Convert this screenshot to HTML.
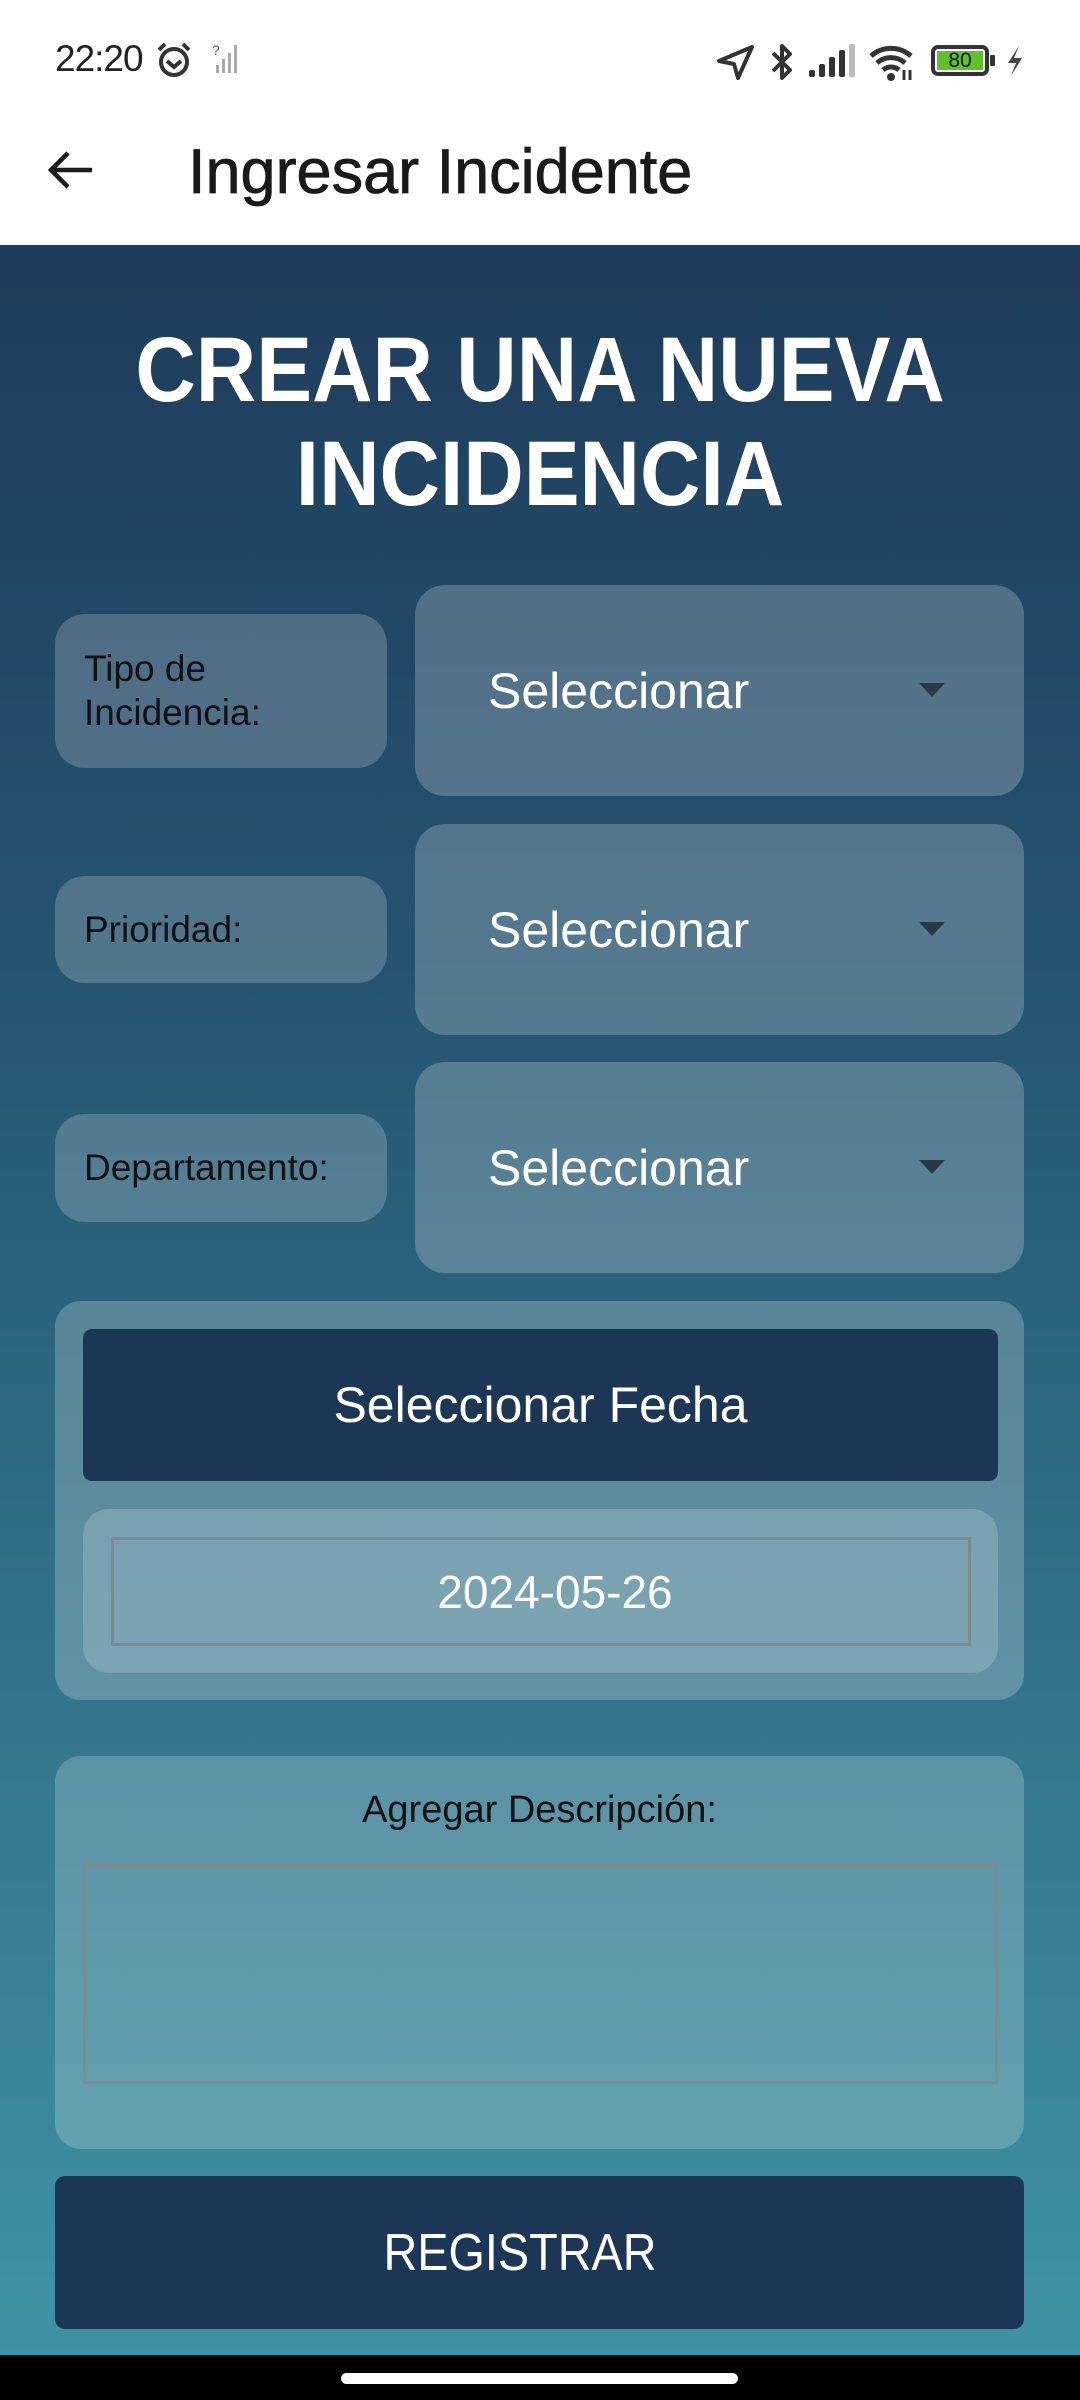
<!DOCTYPE html>
<html><head><meta charset="utf-8"><style>
*{margin:0;padding:0;box-sizing:border-box}
body{width:1080px;height:2400px;position:relative;overflow:hidden;background:#fff;font-family:"Liberation Sans",sans-serif}
.a{position:absolute}
.main{left:0;top:245px;width:1080px;height:2110px;background:linear-gradient(180deg,#1e3c5b 0%,#255571 35%,#33768d 70%,#3f93a5 100%)}
.lab{background:rgba(255,255,255,0.2);border-radius:30px;left:55px;width:332px;color:#111;font-size:37px;padding-left:29px;display:flex;align-items:center;line-height:44px}
.dd{background:rgba(255,255,255,0.22);border-radius:30px;left:415px;width:609px;height:211px;color:#fff;font-size:50px;display:flex;align-items:center;padding-left:73px}
.dd .ar{position:absolute;left:504px;top:98px;width:0;height:0;border-left:13px solid transparent;border-right:13px solid transparent;border-top:14px solid #2a3a44}
.ctr{display:flex;align-items:center;justify-content:center}
</style></head><body>
<div class="a" style="left:55px;top:38px;font-size:37px;color:#222;letter-spacing:-1px">22:20</div>
<svg class="a" style="left:154px;top:40px" width="40" height="40" viewBox="0 0 40 40"><circle cx="20" cy="22" r="13" fill="none" stroke="#333" stroke-width="4"/><path d="M13 21l7 6 7-6" fill="none" stroke="#333" stroke-width="4"/><path d="M5 10l6-6M35 10l-6-6" stroke="#333" stroke-width="4"/></svg>
<svg class="a" style="left:212px;top:43px" width="30" height="32" viewBox="0 0 30 32"><path d="M4 30h3v-8H4zM10 30h3V16h-3zM16 30h3V10h-3zM22 30h3V2h-3z" fill="#aaa"/><text x="0" y="12" font-size="14" fill="#555" font-family="Liberation Sans">?</text></svg>
<svg class="a" style="left:716px;top:44px" width="40" height="36" viewBox="0 0 40 36"><path d="M36 3L3 17l15 3 4 14z" fill="none" stroke="#333" stroke-width="4" stroke-linejoin="round"/></svg>
<svg class="a" style="left:768px;top:42px" width="28" height="40" viewBox="0 0 28 40"><path d="M5 11l17 17-8 8V4l8 8L5 29" fill="none" stroke="#333" stroke-width="4" stroke-linejoin="round"/></svg>
<svg class="a" style="left:806px;top:44px" width="52" height="34" viewBox="0 0 52 34"><rect x="3" y="26" width="6" height="7" rx="2" fill="#333"/><rect x="13" y="20" width="6" height="13" rx="2" fill="#333"/><rect x="23" y="13" width="6" height="20" rx="2" fill="#333"/><rect x="33" y="6" width="6" height="27" rx="2" fill="#333"/><rect x="43" y="0" width="6" height="33" rx="2" fill="#bbb"/></svg>
<svg class="a" style="left:868px;top:42px" width="50" height="40" viewBox="0 0 50 40"><path d="M3 14a30 30 0 0 1 40 0M9 21a21 21 0 0 1 28 0M15 28a12 12 0 0 1 16 0" fill="none" stroke="#333" stroke-width="5"/><circle cx="23" cy="35" r="4" fill="#333"/><path d="M36 28v10M42 28v10" stroke="#333" stroke-width="3"/></svg>
<div class="a" style="left:931px;top:45px;width:58px;height:31px;border:4px solid #333;border-radius:7px;padding:2px"><div style="width:46px;height:19px;background:#5fc22d;font-size:21px;line-height:19px;text-align:center;color:#111">80</div></div>
<div class="a" style="left:990px;top:55px;width:5px;height:11px;background:#333;border-radius:1px"></div>
<svg class="a" style="left:1004px;top:44px" width="22" height="34" viewBox="0 0 22 34"><path d="M15 2L4 19h8L7 32l11-18h-8z" fill="#444"/></svg>
<svg class="a" style="left:46px;top:148px" width="50" height="44" viewBox="0 0 50 44"><path d="M46 22H6M22 5L5 22l17 17" fill="none" stroke="#1a1a1a" stroke-width="4.5"/></svg>
<div class="a" style="left:188px;top:136px;font-size:63px;color:#1a1a1a;-webkit-text-stroke:0.8px #1a1a1a">Ingresar Incidente</div>
<div class="a main"></div>
<div class="a" style="left:0;top:318px;width:1080px;text-align:center;color:#fff;font-weight:bold;font-size:92px;line-height:104px;transform:scaleX(0.91)">CREAR UNA NUEVA<br>INCIDENCIA</div>

<div class="a lab" style="top:614px;height:154px">Tipo de<br>Incidencia:</div>
<div class="a dd" style="top:585px">Seleccionar<div class="ar"></div></div>
<div class="a lab" style="top:876px;height:107px">Prioridad:</div>
<div class="a dd" style="top:824px">Seleccionar<div class="ar"></div></div>
<div class="a lab" style="top:1114px;height:108px">Departamento:</div>
<div class="a dd" style="top:1062px">Seleccionar<div class="ar"></div></div>

<div class="a" style="left:55px;top:1301px;width:969px;height:399px;background:rgba(255,255,255,0.22);border-radius:26px"></div>
<div class="a ctr" style="left:83px;top:1329px;width:915px;height:152px;background:#1c3756;border-radius:9px;color:#fff;font-size:50px">Seleccionar Fecha</div>
<div class="a" style="left:83px;top:1509px;width:915px;height:164px;background:rgba(255,255,255,0.18);border-radius:26px"></div>
<div class="a ctr" style="left:111px;top:1537px;width:860px;height:109px;border:3px solid #7d8a90;color:#fff;font-size:46px;padding-left:28px">2024-05-26</div>

<div class="a" style="left:55px;top:1756px;width:969px;height:393px;background:rgba(255,255,255,0.2);border-radius:26px"></div>
<div class="a" style="left:55px;top:1789px;width:969px;text-align:center;color:#111;font-size:38px">Agregar Descripción:</div>
<div class="a" style="left:83px;top:1864px;width:915px;height:220px;border:3px solid #7d8a90"></div>

<div class="a" style="left:55px;top:2176px;width:969px;height:153px;background:#1c3756;border-radius:10px"></div>
<div class="a ctr" style="left:320px;top:2176px;width:400px;height:153px;color:#fff;font-size:52px;transform:scaleX(0.9)">REGISTRAR</div>

<div class="a" style="left:0;top:2355px;width:1080px;height:45px;background:#000"></div>
<div class="a" style="left:341px;top:2373px;width:397px;height:11px;background:#fff;border-radius:6px"></div>
</body></html>
